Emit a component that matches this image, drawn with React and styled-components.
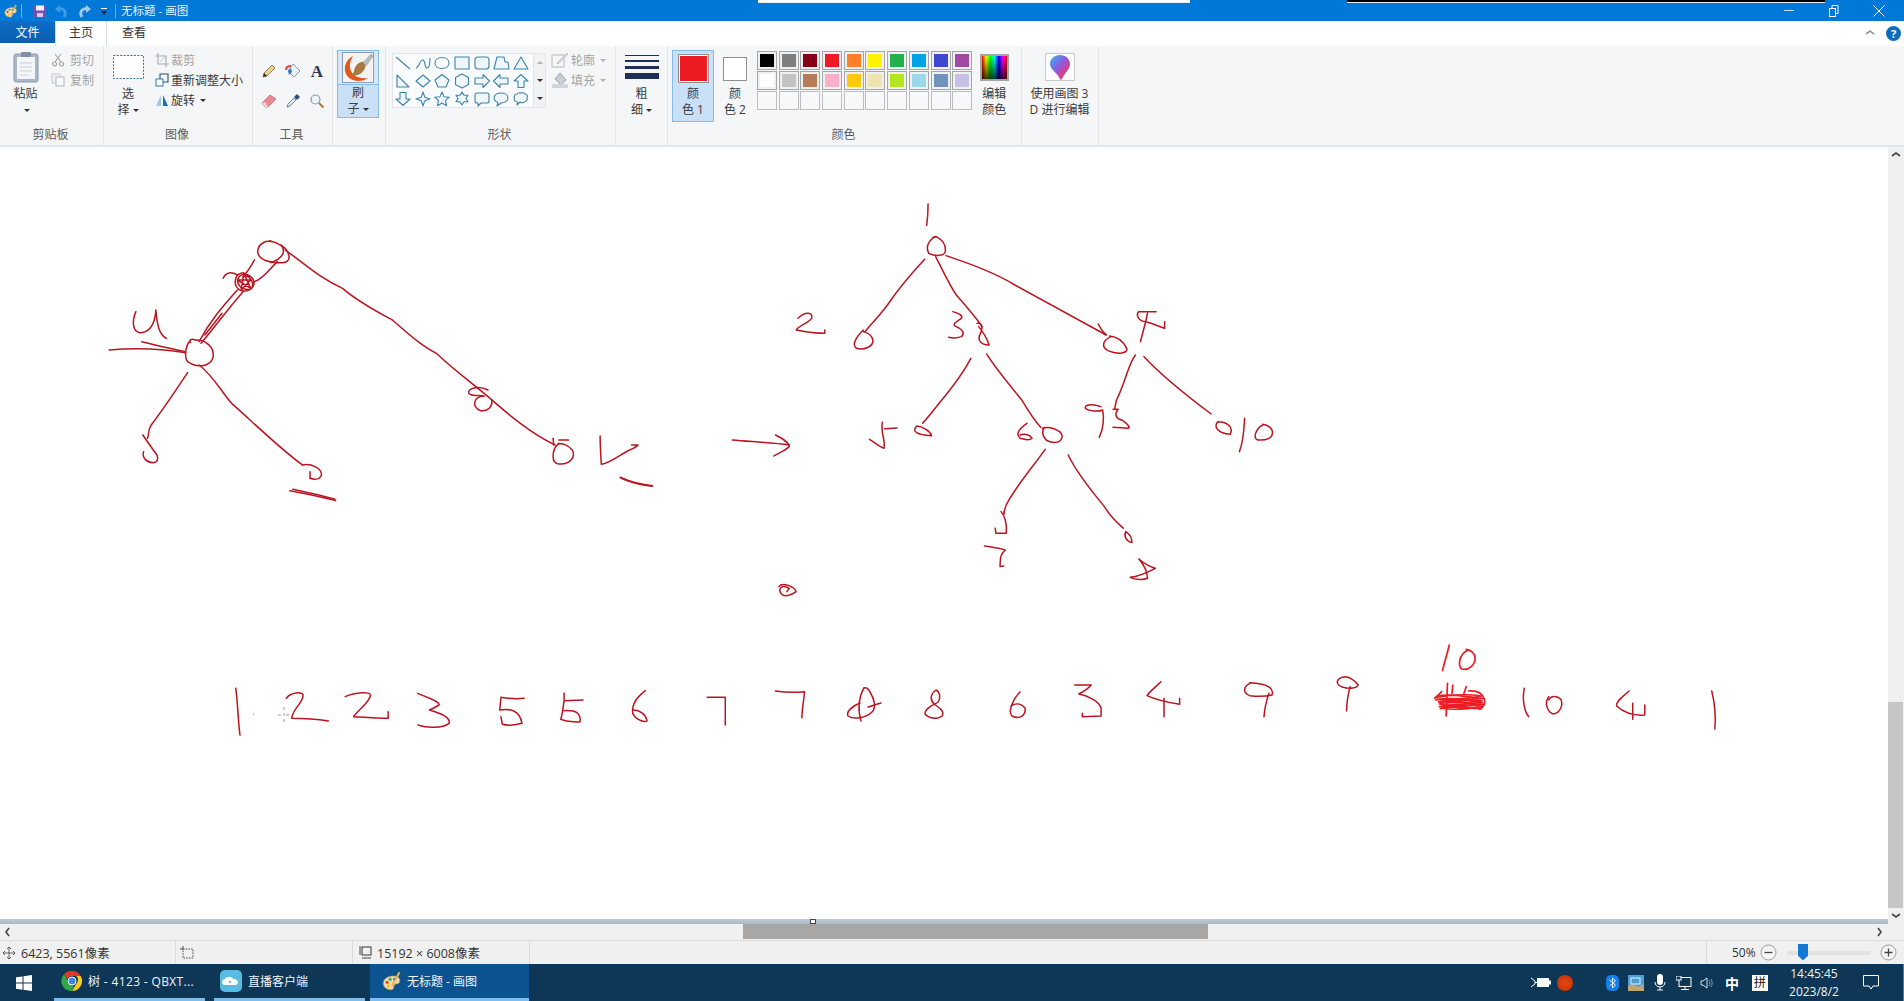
import React from "react";
import styled, { createGlobalStyle } from "styled-components";

const GlobalStyle = createGlobalStyle`
  html, body { margin: 0; padding: 0; height: 100%; overflow: hidden; background: #fff; }
  #root { height: 100%; }
  * { box-sizing: border-box; }
`;

const FONT = `"Open Sans", "Noto Sans CJK SC", sans-serif`;

const Window = styled.div`
  height: 1001px;
  display: flex;
  flex-direction: column;
  font-family: ${FONT};
  font-size: 12px;
  color: #3b3b3b;
`;

/* ---------- title bar ---------- */
const TitleBar = styled.div`
  position: relative;
  height: 21px;
  flex: none;
  display: flex;
  align-items: center;
  background: #0078d7;
  color: #e8f3fc;
`;
const QuickSlot = styled.span`
  width: ${(p) => p.$w}px;
  margin-left: ${(p) => p.$ml || 0}px;
  flex: none;
  display: flex;
  justify-content: center;
  align-items: center;
`;
const QuickDivider = styled.span`
  width: 1px;
  height: 14px;
  flex: none;
  background: #6fb1e6;
  margin-left: ${(p) => p.$ml || 0}px;
`;
const TitleText = styled.span`
  margin-left: 5px;
  font-size: 11.5px;
  line-height: 21px;
`;
const PeekingWindow = styled.div`
  position: absolute;
  top: 0;
  left: ${(p) => p.$x}px;
  width: ${(p) => p.$w}px;
  height: 3px;
  background: ${(p) => p.$fill};
  border-bottom: 1px solid #e6eef6;
`;
const WindowControls = styled.div`
  margin-left: auto;
  padding-right: 3px;
  display: flex;
  align-items: center;
`;
const ControlSlot = styled.span`
  width: 45px;
  height: 21px;
  display: flex;
  align-items: center;
  justify-content: center;
`;

/* ---------- tabs ---------- */
const TabRow = styled.div`
  height: 25px;
  flex: none;
  display: flex;
  background: #fff;
`;
const FileTab = styled.div`
  width: 55px;
  height: 22px;
  background: linear-gradient(#0f6cc4, #0a5fb0);
  color: #fff;
  display: flex;
  align-items: center;
  justify-content: center;
`;
const Tab = styled.div`
  width: ${(p) => p.$w}px;
  height: 25px;
  display: flex;
  align-items: center;
  justify-content: center;
  padding-bottom: 3px;
  color: #333;
  background: #fff;
  border-left: ${(p) => (p.$active ? "1px solid #dcdddf" : "none")};
  border-right: ${(p) => (p.$active ? "1px solid #dcdddf" : "none")};
`;
const TabTools = styled.div`
  margin-left: auto;
  display: flex;
  align-items: center;
  gap: 11px;
  padding: 0 3px 1px 0;
`;
const HelpDot = styled.span`
  width: 15px;
  height: 15px;
  border-radius: 50%;
  background: #0f6cbd;
  color: #fff;
  font-size: 11px;
  font-weight: 700;
  line-height: 15px;
  text-align: center;
`;

/* ---------- ribbon ---------- */
const Ribbon = styled.div`
  height: 101px;
  flex: none;
  display: flex;
  background: #f5f6f7;
  border-bottom: 2px solid #e4e5e7;
`;
const Group = styled.section`
  width: ${(p) => p.$w}px;
  flex: none;
  display: flex;
  flex-direction: column;
  border-right: 1px solid #e4e5e7;
`;
const GroupBody = styled.div`
  height: 77px;
  flex: none;
  display: flex;
`;
const GroupLabel = styled.div`
  flex: 1;
  display: flex;
  align-items: center;
  justify-content: center;
  color: #5c5c5c;
  padding: 0 2px 1px 0;
`;
const BigButton = styled.div`
  width: ${(p) => p.$w}px;
  flex: none;
  display: flex;
  flex-direction: column;
  align-items: center;
  margin-left: ${(p) => p.$ml || 0}px;
`;
const BigIcon = styled.div`
  height: 40px;
  display: flex;
  align-items: center;
  justify-content: center;
  padding-top: 2px;
`;
const Line = styled.div`
  line-height: 16px;
  height: 16px;
  white-space: nowrap;
  display: flex;
  align-items: center;
`;
const Caret = styled.span`
  display: inline-block;
  width: 0;
  height: 0;
  margin-left: ${(p) => (p.$flush ? 0 : 3)}px;
  border-left: 3px solid transparent;
  border-right: 3px solid transparent;
  border-top: 3px solid ${(p) => (p.$dim ? "#b0b0b0" : "#333")};
  transform: ${(p) => (p.$up ? "rotate(180deg)" : "none")};
`;
const ToggleButton = styled.div`
  width: 42px;
  height: ${(p) => p.$h}px;
  flex: none;
  margin: 4px 0 0 ${(p) => p.$ml || 0}px;
  display: flex;
  flex-direction: column;
  align-items: center;
  background: ${(p) => (p.$on ? "#c9e0f7" : "transparent")};
  border: 1px solid ${(p) => (p.$on ? "#86bbe8" : "transparent")};
`;
const BrushFace = styled.div`
  width: 40px;
  height: 35px;
  display: flex;
  align-items: center;
  justify-content: center;
  background: #d5e7f8;
  border-bottom: 1px solid #86bbe8;
`;
const ColorFace = styled.div`
  height: 35px;
  display: flex;
  align-items: center;
  justify-content: center;
`;
const ActiveColor = styled.span`
  width: ${(p) => p.$size}px;
  height: ${(p) => (p.$size > 28 ? 29 : 24)}px;
  background: ${(p) => p.$fill};
  border: 1px solid #8f8f8f;
  box-shadow: inset 0 0 0 1px #fff;
`;
const SmallColumn = styled.div`
  display: flex;
  flex-direction: column;
  padding-top: 4px;
  margin-left: ${(p) => p.$ml || 0}px;
`;
const SmallRow = styled.div`
  height: 20px;
  display: flex;
  align-items: center;
  gap: ${(p) => p.$gap || 4}px;
  white-space: nowrap;
  color: ${(p) => (p.$dim ? "#a3a3a3" : "#3b3b3b")};
`;
const ToolGrid = styled.div`
  display: grid;
  grid-template-columns: repeat(3, 24px);
  grid-auto-rows: 30px;
  padding: 10px 0 0 4px;
  justify-items: center;
  align-items: center;
`;
const TextTool = styled.span`
  font-family: "Liberation Serif", serif;
  font-weight: 700;
  font-size: 17px;
  color: #2b3a55;
  line-height: 1;
`;
const Gallery = styled.div`
  width: 154px;
  height: 55px;
  margin: 7px 0 0 6px;
  display: flex;
  background: #f9fbfd;
  border: 1px solid #e3e5e8;
`;
const ShapeGrid = styled.div`
  width: 140px;
  display: grid;
  grid-template-columns: repeat(7, 19.7px);
  grid-auto-rows: 18px;
  justify-items: center;
  align-items: center;
`;
const GalleryScroll = styled.div`
  flex: 1;
  display: flex;
  flex-direction: column;
  align-items: center;
  border-left: 1px solid #e3e5e8;
  background: #f1f2f4;
`;
const GalleryArrow = styled.span`
  flex: 1;
  display: flex;
  align-items: center;
  justify-content: center;
`;
const Palette = styled.div`
  margin: 5px 0 0 1px;
  display: grid;
  grid-template-columns: repeat(10, 20px);
  column-gap: 1.7px;
  grid-auto-rows: 20px;
  align-content: start;
`;
const Swatch = styled.span`
  height: 19px;
  border: 1px solid ${(p) => (p.$blank ? "#bdbdbd" : "#a5a5a5")};
  background: ${(p) => p.$fill};
  box-shadow: ${(p) => (p.$blank ? "none" : "inset 0 0 0 2px #eef0f2")};
`;
const SpectrumTile = styled.span`
  width: 29px;
  height: 27px;
  border: 2px solid #a5a5a5;
  background:
    linear-gradient(rgba(255,255,255,0), rgba(0,0,0,.75)),
    linear-gradient(90deg, #ff0000, #ffff00, #00ff00, #00ffff, #0000ff, #ff00ff, #ff0000);
`;
const AppTile = styled.span`
  width: 30px;
  height: 28px;
  display: flex;
  align-items: center;
  justify-content: center;
  background: #fff;
  border: 1px solid #c9c9c9;
`;

/* ---------- work area ---------- */
const Workspace = styled.div`
  flex: 1;
  min-height: 0;
  display: flex;
`;
const CanvasColumn = styled.div`
  flex: 1;
  min-width: 0;
  display: flex;
  flex-direction: column;
`;
const Sheet = styled.div`
  flex: 1;
  min-height: 0;
  background: #fff;
`;
const SheetDrawing = styled.svg`
  display: block;
  width: 100%;
  height: 100%;
`;
const Ink = styled.path`
  fill: none;
  stroke: ${(p) => (p.$bright ? "#ed1c24" : "#bb1420")};
  stroke-width: ${(p) => (p.$bright ? 1.7 : 1.5)}px;
  stroke-linecap: round;
  stroke-linejoin: round;
  vector-effect: non-scaling-stroke;
`;
const ResizeBand = styled.div`
  position: relative;
  height: 5px;
  flex: none;
  background: linear-gradient(#c4ccd8, #a9b7c9);
`;
const ResizeHandle = styled.span`
  position: absolute;
  left: 810px;
  top: 0;
  width: 6px;
  height: 5px;
  background: #fff;
  border: 1px solid #444;
`;
const VerticalBar = styled.div`
  width: 16px;
  flex: none;
  display: flex;
  flex-direction: column;
  background: #f0f0f0;
`;
const ScrollArrow = styled.span`
  width: 16px;
  height: 16px;
  flex: none;
  display: flex;
  align-items: center;
  justify-content: center;
`;
const VerticalTrack = styled.div`
  flex: 1;
  display: flex;
  flex-direction: column;
  justify-content: flex-end;
`;
const VerticalThumb = styled.div`
  height: 206px;
  margin-right: 1px;
  background: #c6c6c6;
`;
const HorizontalBar = styled.div`
  height: 16px;
  flex: none;
  display: flex;
  background: #f0f0f0;
`;
const HorizontalTrack = styled.div`
  flex: 1;
  padding-left: 727px;
`;
const HorizontalThumb = styled.div`
  width: 465px;
  height: 15px;
  background: #a8a7a5;
`;
const BarCorner = styled.span`
  width: 16px;
  flex: none;
`;

/* ---------- status bar ---------- */
const StatusBar = styled.div`
  height: 24px;
  flex: none;
  display: flex;
  background: #f0f0f0;
  border-top: 1px solid #dcdcdc;
  color: #333;
  font-size: 12.5px;
`;
const StatusCell = styled.div`
  width: ${(p) => p.$w}px;
  flex: ${(p) => (p.$w ? "none" : 1)};
  display: flex;
  align-items: center;
  gap: ${(p) => p.$gap ?? 6}px;
  padding-left: ${(p) => p.$pl}px;
  border-right: ${(p) => (p.$edge ? "1px solid #dcdcdc" : "none")};
`;
const ZoomPercent = styled.span`
  width: 24px;
  margin-right: 4px;
  font-size: 12px;
`;
const ZoomTrack = styled.span`
  position: relative;
  width: 84px;
  height: 4px;
  margin: 0 9px 0 10px;
  background: #e2e2e2;
  border-radius: 2px;
`;
const ZoomThumb = styled.span`
  position: absolute;
  left: 11px;
  top: -7px;
  width: 10px;
  height: 17px;
  background: #1479d4;
  clip-path: polygon(0 0, 100% 0, 100% 72%, 50% 100%, 0 72%);
`;

/* ---------- taskbar ---------- */
const Taskbar = styled.div`
  height: 37px;
  flex: none;
  display: flex;
  background: #0e3757;
  color: #eef4f9;
`;
const StartSlot = styled.span`
  width: 48px;
  display: flex;
  align-items: center;
  justify-content: center;
  margin-right: 6px;
`;
const TaskItem = styled.div`
  width: ${(p) => p.$w}px;
  flex: none;
  margin-right: ${(p) => p.$mr || 0}px;
  display: flex;
  align-items: center;
  gap: 5px;
  padding-left: ${(p) => p.$pl}px;
  white-space: nowrap;
  letter-spacing: ${(p) => p.$track || 0}px;
  background: ${(p) => (p.$on ? "#0c5391" : "transparent")};
  border-bottom: 3px solid #7cbdec;
`;
const Tray = styled.div`
  margin-left: auto;
  display: flex;
  align-items: center;
  border-right: 1px solid #5d7a91;
`;
const TrayCell = styled.span`
  width: ${(p) => p.$w || 24}px;
  margin-left: ${(p) => p.$ml || 0}px;
  flex: none;
  display: flex;
  align-items: center;
  justify-content: center;
`;
const ImeText = styled.span`
  font-size: 14px;
  font-weight: 700;
  color: #fff;
`;
const ImeBox = styled.span`
  width: 16px;
  height: 16px;
  background: #fff;
  color: #111;
  font-size: 12px;
  line-height: 16px;
  text-align: center;
`;
const RecordDot = styled.span`
  width: 16px;
  height: 16px;
  border-radius: 50%;
  background: radial-gradient(#e8470f, #bd2d06);
`;
const Clock = styled.div`
  width: 58px;
  margin-left: 13px;
  text-align: center;
  font-size: 12px;
  line-height: 18px;
`;

/* ---------- icons ---------- */
const Sv = ({ w, h = w, children, vb }) => (
  <svg width={w} height={h} viewBox={vb || `0 0 ${w} ${h}`} fill="none">{children}</svg>
);

const PaintIcon = ({ s = 16 }) => (
  <Sv w={s} vb="0 0 16 16">
    <path d="M1 10C1 6 5 4 9 4c4 0 6 2 5 5-1 2-3 1-4 2-1 2 0 4-3 4-3 0-6-2-6-5z" fill="#f0dcae" stroke="#a98c55" strokeWidth=".6" />
    <circle cx="4" cy="9" r="1.2" fill="#e33" /><circle cx="6.5" cy="6.5" r="1.2" fill="#2a7" /><circle cx="10" cy="6.5" r="1.2" fill="#27c" /><circle cx="5" cy="12" r="1.2" fill="#fb0" />
    <path d="M8 12L14 1" stroke="#e8b34a" strokeWidth="1.6" />
  </Sv>
);
const SaveIcon = () => (
  <Sv w={14}>
    <rect x="1" y="1" width="12" height="12" rx="1" fill="#7d4bb0" />
    <rect x="3" y="1.5" width="8" height="5" fill="#f5f0fa" />
    <rect x="4" y="9" width="6" height="4" fill="#d9c8ea" />
  </Sv>
);
const UndoIcon = ({ flip }) => (
  <Sv w={14}>
    <path d={flip ? "M5 13C2 8 5 4 10 5" : "M9 13C12 8 9 4 4 5"} stroke={flip ? "#9fcbee" : "#3f9be4"} strokeWidth="3" />
    <path d={flip ? "M9 1l5 4-5 4z" : "M5 1L0 5l5 4z"} fill={flip ? "#9fcbee" : "#3f9be4"} />
  </Sv>
);
const QuickMenu = () => (
  <Sv w={8} h={8}>
    <rect x="1" y="1" width="6" height="1" fill="#fff" />
    <path d="M1 4h6L4 8z" fill="#10233a" />
  </Sv>
);
const PasteIcon = () => (
  <Sv w={26} h={32}>
    <rect x="1" y="3" width="24" height="28" rx="2" fill="#a9b7c8" stroke="#8b9cb0" />
    <rect x="4" y="6" width="18" height="22" fill="#f3f5f8" />
    <rect x="8" y="1" width="10" height="5" rx="1" fill="#7f90a6" />
    <path d="M7 12h12M7 16h12M7 20h12M7 24h8" stroke="#c8d0da" />
  </Sv>
);
const CutIcon = () => (
  <Sv w={14}>
    <path d="M4 1l6 8M10 1L4 9" stroke="#a8a8a8" strokeWidth="1.2" />
    <circle cx="3.5" cy="11" r="2" stroke="#a8a8a8" strokeWidth="1.2" /><circle cx="10.5" cy="11" r="2" stroke="#a8a8a8" strokeWidth="1.2" />
  </Sv>
);
const CopyIcon = () => (
  <Sv w={14}>
    <rect x="1" y="1" width="8" height="9" fill="#eef1f5" stroke="#c0c8d2" />
    <rect x="5" y="4" width="8" height="9" fill="#f9fafb" stroke="#adb6c2" />
  </Sv>
);
const CropIcon = () => (
  <Sv w={14}>
    <path d="M3 0v11h11M0 3h11v11" stroke="#a8aeb6" strokeWidth="1.2" />
    <path d="M5 9l6-6" stroke="#c2c7cd" />
  </Sv>
);
const ResizeIcon = () => (
  <Sv w={14}>
    <rect x="1" y="6" width="7" height="7" fill="#fff" stroke="#2c7bb8" />
    <path d="M5 6V1h8v8H8" stroke="#26507a" strokeWidth="1.1" />
  </Sv>
);
const RotateIcon = () => (
  <Sv w={14}>
    <path d="M6 2L1 13h5z" fill="#9fc6e3" />
    <path d="M8 2l5 11H8z" fill="#1f6fb0" />
  </Sv>
);
const SelectIcon = () => (
  <svg width="31" height="24" viewBox="0 0 31 24" fill="none">
    <rect x=".5" y=".5" width="30" height="23" fill="#fff" stroke="#3a6e9c" strokeDasharray="2 1.4" />
  </svg>
);
const PencilIcon = () => (
  <Sv w={16}>
    <path d="M2 14l1-4 8-8 3 3-8 8z" fill="#ecd08f" stroke="#7a6130" strokeWidth=".7" />
    <path d="M2 14l1-4 3 3z" fill="#3b3020" />
  </Sv>
);
const FillIcon = () => (
  <Sv w={18}>
    <path d="M9 2l7 7-6 6-6-6z" fill="#eef2f6" stroke="#7f9ab5" />
    <path d="M4 9l3-3 1 4-3 3z" fill="#2c7ec2" />
    <path d="M2 8c0-3 2-4 5-4" stroke="#d9453b" strokeWidth="2" />
  </Sv>
);
const EraserIcon = () => (
  <Sv w={18}>
    <path d="M2 11l8-8 6 4-8 8H5z" fill="#ec8a93" stroke="#b75f68" strokeWidth=".7" />
    <path d="M2 11l3 4h3l-3-5z" fill="#f5d5d8" />
  </Sv>
);
const DropperIcon = () => (
  <Sv w={16}>
    <path d="M2 14l1-3 6-6 2 2-6 6z" fill="#dbe7f2" stroke="#52708d" strokeWidth=".8" />
    <path d="M9 4l3-3 3 3-3 3z" fill="#2a4d75" />
  </Sv>
);
const LoupeIcon = () => (
  <Sv w={16}>
    <circle cx="6.5" cy="6.5" r="4.5" fill="#eef4f9" stroke="#8398ad" strokeWidth="1.2" />
    <path d="M10 10l4.500 4.500" stroke="#a9793f" strokeWidth="2" />
  </Sv>
);
const BrushIcon = () => (
  <svg width="32" height="31" viewBox="0 0 32 31" fill="none">
    <rect x=".5" y=".5" width="31" height="30" fill="#f3f3f3" stroke="#8aa1b5" />
    <path d="M11 4C3 8 0 18 6 25c5 5 15 5 20 1-7 1-14-1-17-7-2-5-1-10 2-15z" fill="#e0591b" />
    <path d="M12 19c1-6 6-10 10-9 3 3 1 9-4 12-4 2-8 2-10 1 2-1 4-2 4-4z" fill="#a9793f" />
    <path d="M21 11l8-9 2 2-7 10z" fill="#b7bcc2" stroke="#777" strokeWidth=".4" />
  </svg>
);
const PaletteMark = () => (
  <svg width="22" height="26" viewBox="0 0 22 26">
    <defs>
      <linearGradient id="palette-mark" x1="0" y1="0" x2="1" y2="1">
        <stop offset="0" stopColor="#35b8ee" />
        <stop offset=".45" stopColor="#8a5ce0" />
        <stop offset=".8" stopColor="#f0356f" />
        <stop offset="1" stopColor="#f7a41d" />
      </linearGradient>
    </defs>
    <path d="M11 1c6 0 10 4 10 9 0 6-6 9-8 15-1 1-2 1-2 0C9 19 1 16 1 10 1 5 5 1 11 1z" fill="url(#palette-mark)" />
  </svg>
);

const SHAPES = [
  "M2 2L16 14",
  "M2 13C5 13 6 4 9 5s1 8 4 8 3-8 3-10",
  "M9 2.500c4.500 0 7 2.500 7 5.500s-2.500 5.500-7 5.500S2 11 2 8s2.500-5.500 7-5.500z",
  "M2 2h14v12H2z",
  "M5 2h8c2 0 3 1 3 3v6c0 2-1 3-3 3H5c-2 0-3-1-3-3V5c0-2 1-3 3-3z",
  "M5 2h7l1 5h3l1 7H2z",
  "M9 2l7 12H2z",
  "M3 2l12 12H3z",
  "M9 2l7 6-7 6-7-6z",
  "M9 1.500l7 5.500-3 7H5L2 7z",
  "M9 1l6.500 3.500v7L9 15l-6.500-3.500v-7z",
  "M2 5h8V1.500L16.500 8 10 14.500V11H2z",
  "M16 5H8V1.500L1.500 8 8 14.500V11h8z",
  "M9 1.500L16 8h-4v6.500H6V8H2z",
  "M6 1.500h6V8h4l-7 6.500L2 8h4z",
  "M9 1l1.800 5.200L16 8l-5.200 1.800L9 15l-1.800-5.200L2 8l5.200-1.800z",
  "M9 1l2.100 4.800 5.200.4-3.900 3.400 1.200 5.100L9 12l-4.600 2.700 1.200-5.100L1.700 6.200l5.200-.4z",
  "M9 1l2 3.200h4l-2 3.300 2 3.300h-4L9 14l-2-3.200H3l2-3.300-2-3.300h4z",
  "M4 2h10c1.500 0 2 .8 2 2v6c0 1.200-.5 2-2 2H8l-3 3v-3H4c-1.500 0-2-.8-2-2V4c0-1.200.5-2 2-2z",
  "M9 2c4 0 7 2 7 5s-3 5-7 5l-4 3 1-3.500C3.500 10.500 2 9 2 7c0-3 3-5 7-5z",
  "M5 3c1-2 3-1 4-1s3-1 4 1c2 0 3 2 2 4 1 2-1 4-3 4-1 1-3 1-4 0l-3 3 .5-3C3 11 1.500 9 2.500 7 1.500 5 3 3 5 3z",
];

const ShapeIcon = ({ d, i }) => (
  <svg width="18" height="16" viewBox="0 0 18 16" fill="none">
    <path d={d} stroke="#3f83ab" strokeWidth="1.1" fill={i > 2 ? "#f0f7fb" : "none"} strokeLinejoin="round" />
  </svg>
);

const OutlineIcon = () => (
  <Sv w={18}>
    <rect x="1" y="4" width="12" height="12" stroke="#b5bcc4" />
    <path d="M6 12L16 2l1 1L7 13z" fill="#d8dce1" stroke="#a8aeb6" strokeWidth=".6" />
  </Sv>
);
const BucketIcon = () => (
  <Sv w={18}>
    <path d="M9 2l6 7-5 5-6-6z" fill="#c8ced6" stroke="#9ba3ad" />
    <rect x="1" y="13" width="16" height="4" fill="#d2d6db" />
  </Sv>
);
const Chevron = ({ dir, color = "#444" }) => {
  const d = { up: "M1 6l4-3 4 3", down: "M1 3l4 3 4-3", left: "M6 1L3 5l3 4", right: "M3 1l3 4-3 4" }[dir];
  return (
    <Sv w={10} h={10} vb="0 0 10 10">
      <path d={d} stroke={color} strokeWidth="1.6" />
    </Sv>
  );
};
const SizeLines = () => (
  <svg width="34" height="26" viewBox="0 0 34 26">
    <rect y="1" width="34" height="1" fill="#1d2f57" />
    <rect y="6" width="34" height="2" fill="#1d2f57" />
    <rect y="12" width="34" height="3" fill="#1d2f57" />
    <rect y="19" width="34" height="6" fill="#1d2f57" />
  </svg>
);
const CursorIcon = () => (
  <Sv w={12}>
    <path d="M6 0v12M0 6h12M4 2l2-2 2 2M4 10l2 2 2-2M2 4L0 6l2 2M10 4l2 2-2 2" stroke="#444" strokeWidth=".8" />
  </Sv>
);
const SelectionSizeIcon = () => (
  <Sv w={14}>
    <path d="M3 0v3H0" stroke="#444" />
    <rect x="3" y="3" width="10" height="9" stroke="#444" strokeDasharray="1.500 1.200" />
  </Sv>
);
const CanvasSizeIcon = () => (
  <Sv w={14}>
    <path d="M2 0v9" stroke="#444" />
    <rect x="4" y="1" width="9" height="8" stroke="#333" />
    <path d="M4 12h9" stroke="#444" />
  </Sv>
);
const RoundZoom = ({ plus }) => (
  <Sv w={17}>
    <circle cx="8.500" cy="8.500" r="7.500" fill="#f5f5f5" stroke="#9c9c9c" />
    <path d={plus ? "M4.500 8.500h8M8.500 4.500v8" : "M4.500 8.500h8"} stroke="#444" strokeWidth="1.300" />
  </Sv>
);
const WinLogo = () => (
  <Sv w={16}>
    <path d="M0 2.300l6.500-.9v6.200H0zM7.500 1.300L16 0v7.600H7.500zM0 8.500h6.500v6.200L0 13.800zM7.500 8.500H16V16l-8.500-1.200z" fill="#fff" />
  </Sv>
);
const ChromeIcon = () => (
  <Sv w={22} vb="0 0 22 22">
    <path d="M11 1a10 10 0 0 1 8.700 5H11a5 5 0 0 0-4.700 3.300L3 4.200A10 10 0 0 1 11 1z" fill="#e0392b" />
    <path d="M19.700 6A10 10 0 0 1 11 21l4.300-7.500A5 5 0 0 0 15.300 6z" fill="#f8c91e" />
    <path d="M11 21A10 10 0 0 1 3 4.200l4.300 7.500A5 5 0 0 0 13 15.600z" fill="#2fa74a" />
    <circle cx="11" cy="11" r="4" fill="#3f83e8" stroke="#fff" />
  </Sv>
);
const LiveIcon = () => (
  <svg width="24" height="24" viewBox="0 0 24 24">
    <rect x="1" y="1" width="22" height="22" rx="5" fill="#58bce0" />
    <path d="M6 16c-2 0-3-1-3-3s2-3 3-3c1-3 7-3 8 0 4 0 5 2 5 3 0 2-1 3-3 3z" fill="#fff" />
    <path d="M10 11.500v3l3-1.500z" fill="#58bce0" />
  </svg>
);
const PlugIcon = () => (
  <svg width="20" height="13" viewBox="0 0 20 13" fill="none">
    <rect x="6" y="2" width="12" height="9" fill="#fff" />
    <path d="M0 2l4 3v3l-4 3M4 6.500h2" stroke="#fff" />
    <rect x="18" y="4.500" width="2" height="4" fill="#fff" />
  </svg>
);
const BluetoothIcon = () => (
  <svg width="13" height="16" viewBox="0 0 13 16" fill="none">
    <rect width="13" height="16" rx="5" fill="#1780e8" />
    <path d="M3.500 5l6 5-3 3V3l3 3-6 5" stroke="#fff" strokeWidth=".9" />
  </svg>
);
const MapTile = () => (
  <svg width="16" height="16" viewBox="0 0 16 16">
    <rect width="16" height="16" fill="#4d9dd6" />
    <path d="M0 11l5-2 5 3 6-3v7H0z" fill="#c4a56a" />
    <rect x="3" y="3" width="9" height="6" fill="none" stroke="#dff0fb" />
  </svg>
);
const MicIcon = () => (
  <svg width="12" height="17" viewBox="0 0 12 17" fill="none">
    <rect x="3" y="0" width="6" height="11" rx="3" fill="#fff" />
    <path d="M1 8c0 3 2 5 5 5s5-2 5-5M6 13v3M3 16h6" stroke="#fff" />
  </svg>
);
const NetworkIcon = () => (
  <svg width="16" height="14" viewBox="0 0 16 14" fill="none">
    <rect x="3" y="1.500" width="12" height="9" stroke="#fff" />
    <rect x="0" y="0" width="5" height="4" fill="#0e3757" stroke="#fff" />
    <path d="M9 11v2M5 13.500h8" stroke="#fff" />
  </svg>
);
const SpeakerIcon = () => (
  <svg width="16" height="14" viewBox="0 0 16 14" fill="none">
    <path d="M1 5h2l4-3v10l-4-3H1z" stroke="#d5dfe7" />
    <path d="M9 4c1 2 1 4 0 6M11 3c1.500 2 1.500 6 0 8" stroke="#7f97aa" />
  </svg>
);
const NoticeIcon = () => (
  <svg width="16" height="15" viewBox="0 0 16 15" fill="none">
    <path d="M.5.500h15v10.500H10l-2 3-2-3H.5z" stroke="#fff" />
  </svg>
);

/* ---------- hand-written pen strokes, each set in its own sketch area ---------- */
const LEFT_TREE = [
  "M490 70C460 55 440 70 438 95C440 120 470 130 500 128C525 130 525 105 510 85C500 75 490 70 470 62",
  "M500 75C512 95 505 115 472 128",
  "M490 125C470 145 455 175 430 185", "M430 120C420 140 410 160 400 170",
  "M348 175C355 155 370 155 385 165",
  "M402 158C380 158 372 190 388 208C410 222 432 205 428 182C422 165 400 155 390 170C378 190 395 212 420 208C432 195 420 165 402 168",
  "M385 180L420 180L395 210L402 160L420 205L385 180",
  "M385 210C350 255 315 300 285 365", "M400 215C365 260 330 315 290 370", "M345 280L300 345",
  "M262 362C250 375 245 410 255 425C275 442 315 445 322 410C325 380 300 358 275 360C265 355 258 360 262 368",
  "M120 275C110 300 110 335 130 338C150 340 170 320 172 270C175 310 180 345 200 355",
  "M50 390C100 385 180 385 250 398", "M135 365C170 375 210 385 248 395",
  "M255 458C225 510 190 570 160 615C150 630 155 645 150 655",
  "M138 645C150 665 165 690 175 705C180 720 175 728 165 728C150 728 135 715 140 695",
  "M285 435C320 465 340 510 370 550C420 600 490 680 555 735",
  "M555 735C580 730 605 745 605 765C600 780 590 780 575 775", "M575 755L575 775",
  "M522 812C560 820 610 832 642 842", "M530 808C570 818 615 830 640 838",
  "M510 90C560 130 600 175 660 205C700 245 750 275 790 300C840 350 870 380 905 400C950 450 1000 490 1040 530C1090 580 1150 640 1215 675",
  "M1040 510C1015 495 985 505 990 520C995 530 1020 525 1030 528C1000 530 998 560 1020 572C1040 575 1052 560 1050 540",
  "M1225 670C1205 690 1205 730 1225 732C1255 735 1270 710 1260 690C1250 675 1235 670 1225 672", "M1225 660L1250 660", "M1210 655L1212 675",
  "M1333 648C1333 680 1335 710 1336 733C1360 730 1390 700 1410 690C1420 685 1430 678 1432 675L1415 675",
  "M1385 772C1410 785 1445 795 1470 797", "M1388 775C1410 786 1445 796 1468 799",
];

const RIGHT_TREE = [
  "M488 42C488 65 487 85 484 106",
  "M510 140C490 150 480 170 490 190C510 200 535 198 538 185C540 165 530 150 515 142C510 138 505 140 500 145",
  "M478 208C440 250 400 300 370 345C345 380 320 405 305 425",
  "M300 420C280 440 265 465 280 475C300 482 330 470 328 450C325 435 310 428 300 425",
  "M110 385C130 365 155 365 150 385C140 400 115 405 105 420C130 425 165 430 188 430L188 420",
  "M510 200C530 240 550 285 570 315C600 350 625 380 645 410",
  "M560 365C575 370 590 375 585 385C570 395 555 405 570 410C590 420 595 430 585 440C570 445 560 445 548 442",
  "M630 400C640 395 650 410 640 430C630 450 640 465 665 465C660 445 650 430 635 410",
  "M540 197C590 215 670 240 740 285C810 325 900 375 1005 435", "M982 402C990 420 1000 430 1005 435",
  "M1020 440C995 450 990 470 1010 482C1040 495 1070 490 1065 475C1055 455 1040 440 1015 438",
  "M1100 365L1150 365M1100 365C1090 375 1100 395 1120 395C1140 400 1160 410 1175 415L1175 395M1125 370C1120 400 1110 430 1105 455",
  "M612 505C590 550 560 590 520 640C505 660 490 680 472 700",
  "M455 708C440 725 455 735 498 737C495 725 475 710 455 708",
  "M355 697C350 730 365 750 360 775C345 770 330 755 318 748", "M362 716L398 714",
  "M658 492C680 530 720 580 760 630C780 665 795 690 815 712",
  "M775 700C755 715 740 730 755 745C770 750 785 750 790 745C785 735 770 730 755 735",
  "M825 712C815 730 825 755 850 757C875 760 885 740 870 725C855 715 835 710 820 715",
  "M828 778C800 820 750 880 720 935C705 960 710 985 708 965",
  "M700 965C720 990 715 1020 715 1030L685 1030L683 1015",
  "M652 1068C675 1072 695 1075 712 1080C695 1095 698 1110 697 1130L708 1128",
  "M895 795C915 840 960 900 1000 950C1020 985 1040 1000 1055 1015",
  "M1062 1025C1055 1040 1065 1055 1080 1058C1080 1040 1070 1030 1062 1025",
  "M1100 1107C1115 1120 1130 1130 1148 1135C1120 1150 1095 1160 1075 1162C1090 1170 1115 1170 1125 1165C1125 1145 1115 1125 1100 1107",
  "M1090 495C1070 520 1060 580 1035 630L1030 655",
  "M1025 658L1040 658C1030 670 1030 685 1050 690C1065 700 1075 710 1070 715L1025 712",
  "M990 650C960 640 940 645 945 655C955 665 985 665 995 660C1000 690 995 720 985 742",
  "M1115 500C1160 550 1230 610 1310 672",
  "M1330 695C1315 710 1330 730 1365 733C1375 715 1360 695 1330 695",
  "M1407 685C1405 720 1405 750 1392 785",
  "M1460 705C1440 715 1430 745 1445 750C1470 752 1490 745 1488 725C1485 710 1470 705 1460 703",
  "M-80 750C-30 755 30 757 85 765", "M45 735C65 745 85 760 85 770C70 785 50 790 40 798",
  "M55 1190C65 1175 100 1190 105 1205C90 1215 75 1222 65 1215C50 1200 60 1180 85 1195L78 1205",
];

const ORDER_LEFT = [
  "M85 85C90 130 90 180 95 225",
  "M205 115C215 95 245 95 245 105C245 130 220 145 218 175C250 175 280 178 305 183",
  "M345 110C370 95 405 95 405 105C405 125 375 150 365 170C390 172 420 175 447 175L447 155",
  "M517 100C545 115 570 125 568 135C555 145 545 150 545 150C570 160 595 170 592 190C575 205 540 205 518 195",
  "M770 115C750 118 730 115 715 112L712 150C735 145 760 150 765 190C745 197 725 197 718 192L715 170",
  "M865 100L865 122L910 120M865 122C863 140 860 170 857 178C875 187 905 187 903 185C905 160 895 150 865 152",
  "M1058 92C1040 110 1025 130 1028 160C1035 180 1060 190 1062 182C1060 165 1045 150 1030 150",
  "M1205 112L1248 112L1248 195",
  "M1367 93C1390 97 1420 97 1436 95C1435 120 1430 150 1430 173",
];

/* the two eights and the six that sit between the lower number groups, in page units */
const ORDER_MIDDLE = [
  "M864 688C858 698 858 712 861 721",
  "M860 703C852 706 846 712 848 716C854 720 866 718 872 712C876 708 875 700 870 692C868 688 866 687 864 688",
  "M868 707C872 706 877 704 881 703",
  "M936 690C930 694 930 700 934 704C940 708 945 712 942 716C938 720 928 718 925 714C925 708 932 706 938 702C941 698 940 692 936 690",
  "M1020 692C1012 700 1008 712 1012 716C1020 720 1026 715 1025 708C1020 702 1014 704 1011 706",
];

const ORDER_RIGHT = [
  "M33 165L70 165C60 180 45 190 42 192C60 195 90 215 92 235L92 258L50 260L50 250",
  "M226 155C215 170 200 185 195 197C215 210 245 218 268 223L268 205M233 205L233 260",
  "M425 160C410 170 410 190 425 197C445 200 465 198 475 195C480 175 465 160 425 158M468 190C462 215 458 240 457 260",
  "M640 140C620 142 615 160 630 170C650 178 665 175 668 165C660 150 645 140 640 140M650 170C645 195 642 220 642 243",
  "M1040 175C1035 210 1040 245 1050 260",
  "M1095 200C1085 215 1090 245 1105 252C1120 250 1128 225 1122 208C1115 198 1100 195 1095 210",
  "M1275 183C1260 200 1245 215 1247 228C1265 250 1290 257 1310 255L1310 225M1283 220L1283 268",
  "M1460 183C1465 210 1470 250 1467 297",
];

const ORDER_RIGHT_BRIGHT = [
  "M872 45C868 70 860 100 857 122M915 60C895 70 890 105 900 117C915 122 930 105 930 85C930 70 920 60 910 58",
  "M840 203C880 193 920 193 945 198C900 210 860 206 845 208C880 213 930 208 945 213C900 222 860 214 850 222C880 232 930 218 945 230C900 240 860 240 855 232C890 228 930 225 945 222",
  "M845 198C880 188 920 203 948 206C900 203 860 220 848 216C880 203 930 228 948 224C900 230 860 230 852 236",
  "M842 210C880 200 920 210 946 218C900 222 860 226 850 230C880 228 920 236 944 236",
  "M915 183C955 178 960 228 940 238", "M868 160L865 258", "M880 165L878 190", "M910 170L905 190", "M855 185L840 205",
];

const PALETTE = [
  "#000000", "#7f7f7f", "#880015", "#ed1c24", "#ff7f27", "#fff200", "#22b14c", "#00a2e8", "#3f48cc", "#a349a4",
  "#ffffff", "#c3c3c3", "#b97a57", "#ffaec9", "#ffc90e", "#efe4b0", "#b5e61d", "#99d9ea", "#7092be", "#c8bfe7",
];

const Strokes = ({ list, bright }) => list.map((d) => <Ink key={d} d={d} $bright={bright} />);

export default function App() {
  return (
    <Window>
      <GlobalStyle />

      <TitleBar>
        <PeekingWindow $x={758} $w={432} $fill="#ffffff" />
        <PeekingWindow $x={1347} $w={478} $fill="#000000" />
        <QuickSlot $w={21}><PaintIcon s={14} /></QuickSlot>
        <QuickDivider />
        <QuickSlot $w={26} $ml={5}><SaveIcon /></QuickSlot>
        <QuickSlot $w={18}><UndoIcon /></QuickSlot>
        <QuickSlot $w={26}><UndoIcon flip /></QuickSlot>
        <QuickSlot $w={14}><QuickMenu /></QuickSlot>
        <QuickDivider $ml={4} />
        <TitleText>无标题 - 画图</TitleText>
        <WindowControls>
          <ControlSlot>
            <svg width="10" height="2"><rect width="10" height="1" fill="#cfe5f7" /></svg>
          </ControlSlot>
          <ControlSlot>
            <svg width="10" height="12" fill="none"><rect x=".5" y="3.500" width="6" height="8" stroke="#fff" /><path d="M3 3V.5h6v8H7" stroke="#fff" /></svg>
          </ControlSlot>
          <ControlSlot>
            <svg width="12" height="12" fill="none"><path d="M.5.500l11 11M11.500.500l-11 11" stroke="#fff" /></svg>
          </ControlSlot>
        </WindowControls>
      </TitleBar>

      <TabRow>
        <FileTab>文件</FileTab>
        <Tab $w={52} $active>主页</Tab>
        <Tab $w={54}>查看</Tab>
        <TabTools>
          <Chevron dir="up" color="#9a9a9a" />
          <HelpDot>?</HelpDot>
        </TabTools>
      </TabRow>

      <Ribbon>
        <Group $w={104}>
          <GroupBody>
            <BigButton $w={51}>
              <BigIcon><PasteIcon /></BigIcon>
              <Line>粘贴</Line>
              <Line><Caret /></Line>
            </BigButton>
            <SmallColumn>
              <SmallRow $dim $gap={5}><CutIcon />剪切</SmallRow>
              <SmallRow $dim $gap={5}><CopyIcon />复制</SmallRow>
            </SmallColumn>
          </GroupBody>
          <GroupLabel>剪贴板</GroupLabel>
        </Group>

        <Group $w={149}>
          <GroupBody>
            <BigButton $w={48}>
              <BigIcon><SelectIcon /></BigIcon>
              <Line>选</Line>
              <Line>择<Caret /></Line>
            </BigButton>
            <SmallColumn $ml={3}>
              <SmallRow $dim $gap={2}><CropIcon />裁剪</SmallRow>
              <SmallRow $gap={2}><ResizeIcon />重新调整大小</SmallRow>
              <SmallRow $gap={2}><RotateIcon />旋转<Caret /></SmallRow>
            </SmallColumn>
          </GroupBody>
          <GroupLabel>图像</GroupLabel>
        </Group>

        <Group $w={80}>
          <GroupBody>
            <ToolGrid>
              <PencilIcon />
              <FillIcon />
              <TextTool>A</TextTool>
              <EraserIcon />
              <DropperIcon />
              <LoupeIcon />
            </ToolGrid>
          </GroupBody>
          <GroupLabel>工具</GroupLabel>
        </Group>

        <Group $w={53}>
          <GroupBody>
            <ToggleButton $on $h={68} $ml={4}>
              <BrushFace><BrushIcon /></BrushFace>
              <Line>刷</Line>
              <Line>子<Caret /></Line>
            </ToggleButton>
          </GroupBody>
          <GroupLabel />
        </Group>

        <Group $w={230}>
          <GroupBody>
            <Gallery>
              <ShapeGrid>
                {SHAPES.map((d, i) => <ShapeIcon key={d} d={d} i={i} />)}
              </ShapeGrid>
              <GalleryScroll>
                <GalleryArrow><Caret $dim $up $flush /></GalleryArrow>
                <GalleryArrow><Caret $flush /></GalleryArrow>
                <GalleryArrow><Caret $flush /></GalleryArrow>
              </GalleryScroll>
            </Gallery>
            <SmallColumn $ml={5}>
              <SmallRow $dim $gap={2}><OutlineIcon />轮廓<Caret $dim /></SmallRow>
              <SmallRow $dim $gap={2}><BucketIcon />填充<Caret $dim /></SmallRow>
            </SmallColumn>
          </GroupBody>
          <GroupLabel>形状</GroupLabel>
        </Group>

        <Group $w={52}>
          <GroupBody>
            <BigButton $w={51}>
              <BigIcon><SizeLines /></BigIcon>
              <Line>粗</Line>
              <Line>细<Caret /></Line>
            </BigButton>
          </GroupBody>
          <GroupLabel />
        </Group>

        <Group $w={354}>
          <GroupBody>
            <ToggleButton $on $h={72} $ml={4}>
              <ColorFace><ActiveColor $size={31} $fill="#ed1c24" /></ColorFace>
              <Line>颜</Line>
              <Line>色 1</Line>
            </ToggleButton>
            <ToggleButton $h={72}>
              <ColorFace><ActiveColor $size={24} $fill="#ffffff" /></ColorFace>
              <Line>颜</Line>
              <Line>色 2</Line>
            </ToggleButton>
            <Palette>
              {PALETTE.map((c) => <Swatch key={c} $fill={c} />)}
              {Array.from({ length: 10 }, (_, i) => <Swatch key={i} $blank $fill="#f7f8f9" />)}
            </Palette>
            <BigButton $w={40} $ml={2}>
              <BigIcon><SpectrumTile /></BigIcon>
              <Line>编辑</Line>
              <Line>颜色</Line>
            </BigButton>
          </GroupBody>
          <GroupLabel>颜色</GroupLabel>
        </Group>

        <Group $w={77}>
          <GroupBody>
            <BigButton $w={75}>
              <BigIcon><AppTile><PaletteMark /></AppTile></BigIcon>
              <Line>使用画图 3</Line>
              <Line>D 进行编辑</Line>
            </BigButton>
          </GroupBody>
          <GroupLabel />
        </Group>
      </Ribbon>

      <Workspace>
        <CanvasColumn>
          <Sheet>
            <SheetDrawing viewBox="0 147 1888 772" preserveAspectRatio="none">
              <g transform="translate(90 220) scale(0.3827 0.3333)"><Strokes list={LEFT_TREE} /></g>
              <g transform="translate(760 190) scale(0.3444 0.3333)"><Strokes list={RIGHT_TREE} /></g>
              <g transform="translate(200 660) scale(0.4209 0.3333)"><Strokes list={ORDER_LEFT} /></g>
              <Strokes list={ORDER_MIDDLE} />
              <g transform="translate(1060 630) scale(0.4464 0.3333)">
                <Strokes list={ORDER_RIGHT} />
                <Strokes list={ORDER_RIGHT_BRIGHT} bright />
              </g>
              <path d="M253 714h1M284 707v3M284 713v3M284 719v3M278 715h3M286 715h3" stroke="#9a9a9a" fill="none" />
            </SheetDrawing>
          </Sheet>
          <ResizeBand><ResizeHandle /></ResizeBand>
        </CanvasColumn>
        <VerticalBar>
          <ScrollArrow><Chevron dir="up" /></ScrollArrow>
          <VerticalTrack><VerticalThumb /></VerticalTrack>
          <ScrollArrow><Chevron dir="down" /></ScrollArrow>
        </VerticalBar>
      </Workspace>

      <HorizontalBar>
        <ScrollArrow><Chevron dir="left" /></ScrollArrow>
        <HorizontalTrack><HorizontalThumb /></HorizontalTrack>
        <ScrollArrow><Chevron dir="right" /></ScrollArrow>
        <BarCorner />
      </HorizontalBar>

      <StatusBar>
        <StatusCell $w={176} $pl={3} $edge><CursorIcon />6423, 5561像素</StatusCell>
        <StatusCell $w={177} $pl={4} $edge><SelectionSizeIcon /></StatusCell>
        <StatusCell $w={177} $pl={5} $gap={5} $edge><CanvasSizeIcon />15192 × 6008像素</StatusCell>
        <StatusCell $pl={0} $edge />
        <StatusCell $w={197} $pl={25} $gap={0}>
          <ZoomPercent>50%</ZoomPercent>
          <RoundZoom />
          <ZoomTrack><ZoomThumb /></ZoomTrack>
          <RoundZoom plus />
        </StatusCell>
      </StatusBar>

      <Taskbar>
        <StartSlot><WinLogo /></StartSlot>
        <TaskItem $w={151} $mr={9} $pl={7} $track={0.35}><ChromeIcon />树 - 4123 - QBXT...</TaskItem>
        <TaskItem $w={151} $mr={5} $pl={5}><LiveIcon />直播客户端</TaskItem>
        <TaskItem $w={159} $on $pl={12}><PaintIcon s={20} />无标题 - 画图</TaskItem>
        <Tray>
          <TrayCell><PlugIcon /></TrayCell>
          <TrayCell><RecordDot /></TrayCell>
          <TrayCell $ml={23}><BluetoothIcon /></TrayCell>
          <TrayCell><MapTile /></TrayCell>
          <TrayCell><MicIcon /></TrayCell>
          <TrayCell><NetworkIcon /></TrayCell>
          <TrayCell><SpeakerIcon /></TrayCell>
          <TrayCell><ImeText>中</ImeText></TrayCell>
          <TrayCell $ml={4}><ImeBox>拼</ImeBox></TrayCell>
          <Clock>14:45:45<br />2023/8/2</Clock>
          <TrayCell $w={42} $ml={7}><NoticeIcon /></TrayCell>
          <TrayCell $w={11} />
        </Tray>
      </Taskbar>
    </Window>
  );
}
